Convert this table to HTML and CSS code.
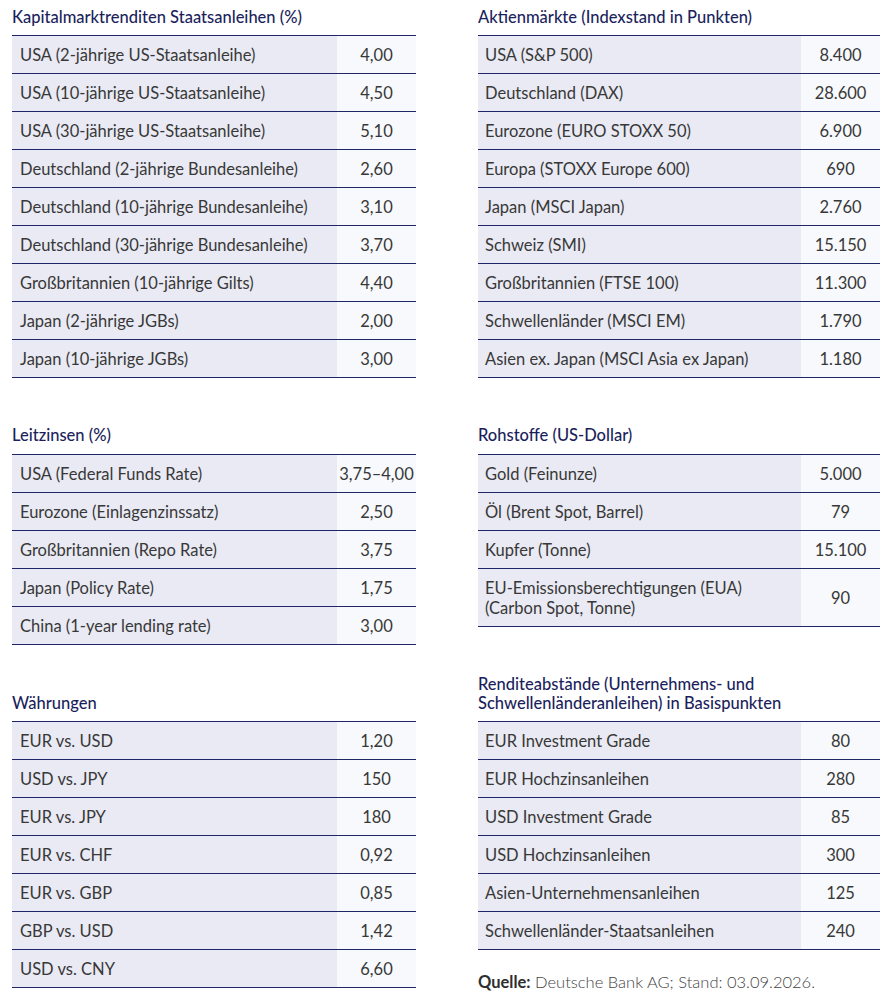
FILE: index.html
```html
<!DOCTYPE html>
<html lang="de">
<head>
    <meta charset="UTF-8">
    <meta name="viewport" content="width=device-width, initial-scale=1.0">
    <title>Marktprognosen</title>
    <link rel="stylesheet" href="styles.css">
</head>
<body>
    <div class="tables">
        <h2 class="section-title first">Kapitalmarktrenditen Staatsanleihen (%)</h2>
        <h2 class="section-title first">Aktienmärkte (Indexstand in Punkten)</h2>

        <table class="data">
            <colgroup><col><col class="value-col"></colgroup>
            <tr><td>USA (2-jährige US-Staatsanleihe)</td><td>4,00</td></tr>
            <tr><td>USA (10-jährige US-Staatsanleihe)</td><td>4,50</td></tr>
            <tr><td>USA (30-jährige US-Staatsanleihe)</td><td>5,10</td></tr>
            <tr><td>Deutschland (2-jährige Bundesanleihe)</td><td>2,60</td></tr>
            <tr><td>Deutschland (10-jährige Bundesanleihe)</td><td>3,10</td></tr>
            <tr><td>Deutschland (30-jährige Bundesanleihe)</td><td>3,70</td></tr>
            <tr><td>Großbritannien (10-jährige Gilts)</td><td>4,40</td></tr>
            <tr><td>Japan (2-jährige JGBs)</td><td>2,00</td></tr>
            <tr><td>Japan (10-jährige JGBs)</td><td>3,00</td></tr>
        </table>
        <table class="data">
            <colgroup><col><col class="value-col"></colgroup>
            <tr><td>USA (S&amp;P 500)</td><td>8.400</td></tr>
            <tr><td>Deutschland (DAX)</td><td>28.600</td></tr>
            <tr><td>Eurozone (EURO STOXX 50)</td><td>6.900</td></tr>
            <tr><td>Europa (STOXX Europe 600)</td><td>690</td></tr>
            <tr><td>Japan (MSCI Japan)</td><td>2.760</td></tr>
            <tr><td>Schweiz (SMI)</td><td>15.150</td></tr>
            <tr><td>Großbritannien (FTSE 100)</td><td>11.300</td></tr>
            <tr><td>Schwellenländer (MSCI EM)</td><td>1.790</td></tr>
            <tr><td>Asien ex. Japan (MSCI Asia ex Japan)</td><td>1.180</td></tr>
        </table>

        <h2 class="section-title">Leitzinsen (%)</h2>
        <h2 class="section-title">Rohstoffe (US-Dollar)</h2>

        <table class="data">
            <colgroup><col><col class="value-col"></colgroup>
            <tr><td>USA (Federal Funds Rate)</td><td>3,75–4,00</td></tr>
            <tr><td>Eurozone (Einlagenzinssatz)</td><td>2,50</td></tr>
            <tr><td>Großbritannien (Repo Rate)</td><td>3,75</td></tr>
            <tr><td>Japan (Policy Rate)</td><td>1,75</td></tr>
            <tr><td>China (1-year lending rate)</td><td>3,00</td></tr>
        </table>
        <table class="data">
            <colgroup><col><col class="value-col"></colgroup>
            <tr><td>Gold (Feinunze)</td><td>5.000</td></tr>
            <tr><td>Öl (Brent Spot, Barrel)</td><td>79</td></tr>
            <tr><td>Kupfer (Tonne)</td><td>15.100</td></tr>
            <tr><td>EU-Emissionsberechtigungen (EUA)<br>(Carbon Spot, Tonne)</td><td>90</td></tr>
        </table>

        <h2 class="section-title">Währungen</h2>
        <h2 class="section-title">Renditeabstände (Unternehmens- und<br>Schwellenländeranleihen) in Basispunkten</h2>

        <table class="data">
            <colgroup><col><col class="value-col"></colgroup>
            <tr><td>EUR vs. USD</td><td>1,20</td></tr>
            <tr><td>USD vs. JPY</td><td>150</td></tr>
            <tr><td>EUR vs. JPY</td><td>180</td></tr>
            <tr><td>EUR vs. CHF</td><td>0,92</td></tr>
            <tr><td>EUR vs. GBP</td><td>0,85</td></tr>
            <tr><td>GBP vs. USD</td><td>1,42</td></tr>
            <tr><td>USD vs. CNY</td><td>6,60</td></tr>
        </table>
        <div>
            <table class="data">
                <colgroup><col><col class="value-col"></colgroup>
                <tr><td>EUR Investment Grade</td><td>80</td></tr>
                <tr><td>EUR Hochzinsanleihen</td><td>280</td></tr>
                <tr><td>USD Investment Grade</td><td>85</td></tr>
                <tr><td>USD Hochzinsanleihen</td><td>300</td></tr>
                <tr><td>Asien-Unternehmensanleihen</td><td>125</td></tr>
                <tr><td>Schwellenländer-Staatsanleihen</td><td>240</td></tr>
            </table>
            <p class="source"><strong>Quelle:</strong> Deutsche Bank AG; Stand: 03.09.2026.</p>
        </div>
    </div>
</body>
</html>
```

FILE: styles.css
```css
body {
    margin: 0;
    padding: 7.5px 14px 0 12px;
    font-family: Lato, "Open Sans", Arial, sans-serif;
    color: #383838;
    background: #fff;
}
.tables {
    display: grid;
    grid-template-columns: 404px 402px;
    column-gap: 62px;
    align-items: start;
}
.section-title {
    display: flex;
    align-items: flex-end;
    align-self: end;
    min-height: 37px;
    margin: 30px 0 0;
    padding-bottom: 8.5px;
    font-size: 16.5px;
    line-height: 19px;
    font-weight: 500;
    color: #1c1f5c;
}
.section-title.first {
    min-height: 0;
    margin-top: 0;
}
.data {
    width: 100%;
    border-collapse: collapse;
    table-layout: fixed;
    border-top: 1px solid #1f2566;
    font-size: 16.5px;
    line-height: 20px;
}
.value-col {
    width: 79px;
}
.data td {
    padding: 9px 7px 8px;
    border-bottom: 1px solid #1f2566;
    background: #e9eaf3;
    vertical-align: middle;
}
.data td:last-child {
    padding: 9px 0 8px;
    text-align: center;
    background: #f7f9fc;
}
.tables > table:nth-of-type(odd) td:first-child {
    padding-left: 8px;
}
.source {
    margin: 22px 0 0;
    font-size: 16.5px;
    line-height: 20px;
    font-weight: 300;
    color: #444;
}
.source strong {
    font-weight: 700;
    color: #2e2e2e;
}
```
